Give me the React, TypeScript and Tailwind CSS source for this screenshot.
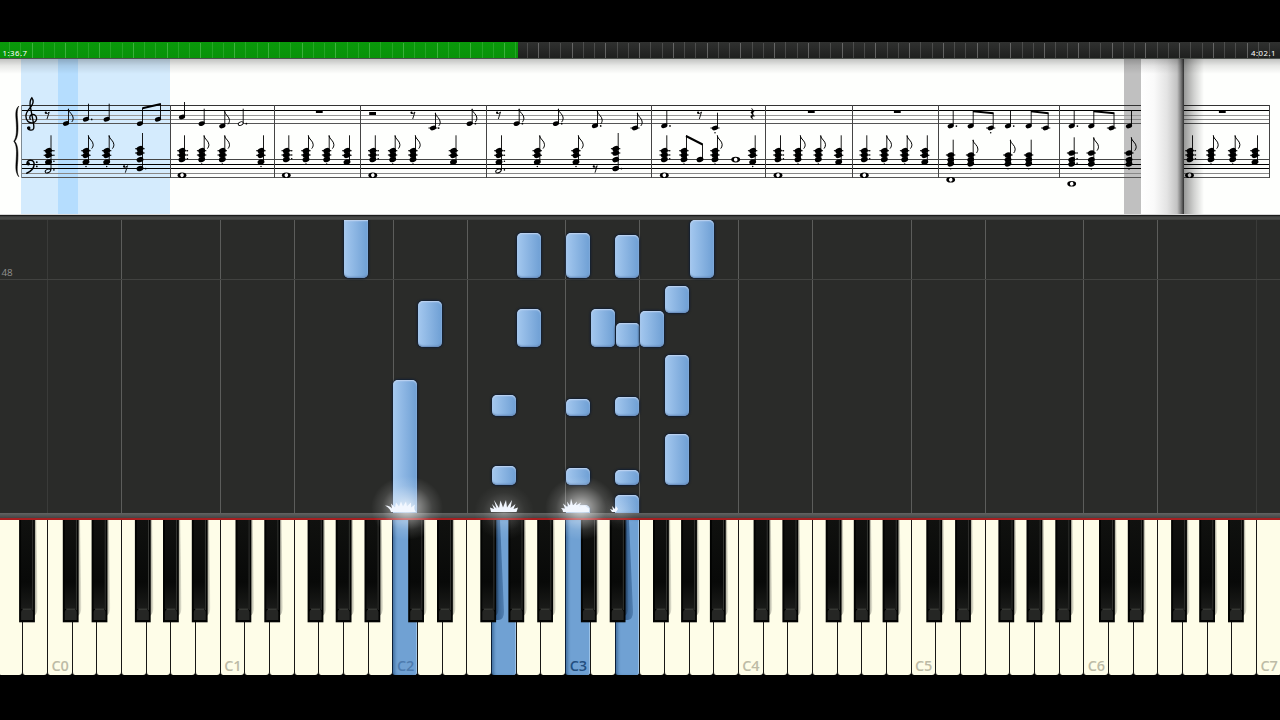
import React from "react";

/* ---------- sheet music ---------- */

const A = [150.7, 155, 159.5];
const B = [150.7, 155.3, 162];
const D = [148.7, 153, 159.6, 168.5];
const E = [155, 159.6, 163.8];
const F = [153, 159.6, 164];

type Chord = {
  x: number;
  heads: number[];
  top: number;
  flag?: boolean;
  dots?: boolean;
  dot?: boolean;
  stac?: number;
  half?: number;
  hollow?: boolean;
  ledger?: boolean;
};

const bass: Chord[] = [
  { x: 48.5, heads: B, top: 135.3, dots: true, half: 170.7 },
  { x: 86, heads: B, top: 135.3, flag: true, stac: 166.5 },
  { x: 106.7, heads: B, top: 135.3, flag: true, stac: 166.5 },
  { x: 140, heads: D, top: 133, dot: true },
  { x: 182, heads: A, top: 135.3, dots: true },
  { x: 201.7, heads: A, top: 135.3, flag: true, stac: 164 },
  { x: 222.3, heads: A, top: 135.3, flag: true, stac: 164 },
  { x: 261, heads: B, top: 135.3, stac: 166.5 },
  { x: 286.3, heads: A, top: 135.3, dots: true },
  { x: 306, heads: A, top: 135.3, flag: true, stac: 164 },
  { x: 326.7, heads: A, top: 135.3, flag: true, stac: 164 },
  { x: 347, heads: B, top: 135.3 },
  { x: 372.8, heads: A, top: 135.3, dots: true },
  { x: 392.7, heads: A, top: 135.3, flag: true, stac: 164 },
  { x: 413, heads: A, top: 135.3, flag: true, stac: 164 },
  { x: 453.5, heads: B, top: 135.3 },
  { x: 499, heads: B, top: 135.3, dots: true, half: 170.7 },
  { x: 537.3, heads: B, top: 135.3, flag: true, stac: 166.5 },
  { x: 576, heads: B, top: 135.3, flag: true, stac: 166.5 },
  { x: 615.7, heads: D, top: 133, dot: true },
  { x: 664.3, heads: A, top: 135.3, dots: true },
  { x: 684, heads: A, top: 135.3, stac: 164 },
  { x: 700, heads: [159.5], top: 144 },
  { x: 715, heads: A, top: 135.3, flag: true, stac: 164 },
  { x: 752.7, heads: B, top: 135.3, stac: 166.5 },
  { x: 778, heads: A, top: 135.3, dots: true },
  { x: 798, heads: A, top: 135.3, flag: true, stac: 164 },
  { x: 818.3, heads: A, top: 135.3, flag: true, stac: 164 },
  { x: 838.7, heads: B, top: 135.3 },
  { x: 864.3, heads: A, top: 135.3, dots: true },
  { x: 884.3, heads: A, top: 135.3, flag: true, stac: 164 },
  { x: 904.7, heads: A, top: 135.3, flag: true, stac: 164 },
  { x: 924.8, heads: B, top: 135.3 },
  { x: 950.7, heads: E, top: 139.7, stac: 168.8 },
  { x: 970.7, heads: E, top: 139.7, flag: true, stac: 168.8 },
  { x: 1008, heads: E, top: 139.7, flag: true, stac: 168.8 },
  { x: 1028.7, heads: E, top: 139.7, stac: 168.8 },
  { x: 1071.7, heads: F, top: 137.3, dots: true },
  { x: 1091.3, heads: F, top: 137.3, flag: true, stac: 169 },
  { x: 1129, heads: F, top: 137.3, flag: true, stac: 169 },
  { x: 1190, heads: A, top: 135.3, dots: true },
  { x: 1211, heads: A, top: 135.3, flag: true, stac: 164 },
  { x: 1232.7, heads: A, top: 135.3, flag: true, stac: 164 },
  { x: 1255, heads: B, top: 135.3 },
];

const treble: Chord[] = [
  { x: 66, heads: [123.5], top: 108.7, flag: true },
  { x: 86, heads: [119.3], top: 103.7, dot: true },
  { x: 106.7, heads: [119.3], top: 103.7 },
  { x: 140, heads: [123.6], top: 108 },
  { x: 158, heads: [119.3], top: 103.7 },
  { x: 182, heads: [117], top: 102 },
  { x: 201.7, heads: [123.6], top: 108.7 },
  { x: 222.3, heads: [126], top: 111, flag: true },
  { x: 240.7, heads: [123.6], top: 108.7, dot: true, hollow: true },
  { x: 433, heads: [128], top: 112.7, flag: true, dot: true, ledger: true },
  { x: 469.7, heads: [123.6], top: 108.7, flag: true, dot: true },
  { x: 516.7, heads: [123.6], top: 108.7, flag: true, dot: true },
  { x: 556, heads: [123.6], top: 108.7, flag: true, dot: true },
  { x: 595, heads: [125.8], top: 110.7, flag: true, dot: true },
  { x: 635, heads: [128], top: 112.7, flag: true, ledger: true },
  { x: 664.3, heads: [125.8], top: 110.7, dot: true },
  { x: 715, heads: [128], top: 112.7, ledger: true, stac: 132.7 },
  { x: 950.7, heads: [126], top: 110.7, dot: true },
  { x: 970.7, heads: [126], top: 110.7 },
  { x: 990.7, heads: [128], top: 112.7, ledger: true, stac: 132.7 },
  { x: 1008, heads: [126], top: 110.7, dot: true },
  { x: 1028.7, heads: [126], top: 110.7 },
  { x: 1045.7, heads: [128], top: 112.7, ledger: true },
  { x: 1071.7, heads: [126], top: 110.7, dot: true },
  { x: 1091.3, heads: [126], top: 110.7 },
  { x: 1111.5, heads: [128], top: 112.7, ledger: true },
  { x: 1129, heads: [126], top: 110.7 },
];

const wholes: [number, number][] = [
  [182, 175.2], [286.3, 175.2], [372.8, 175.2], [664.3, 175.2], [735.7, 159.6],
  [778, 175.2], [864.3, 175.2], [950.7, 179.7], [1071.7, 183.8], [1189.5, 175.2],
];

const blockRests: [number, number][] = [
  [319.3, 111.6], [372.6, 113.6], [811.3, 111.6], [897.3, 111.6], [1222.3, 111.6],
];

const eighthRests: [number, number][] = [
  [47, 115], [125.3, 168.7], [412.7, 115], [498.3, 115], [595, 168.7], [699.3, 115],
];

const beams: [number, number, number, number][] = [
  [142.4, 108.3, 160.9, 104],
  [686, 136, 702.6, 144.5],
  [973, 111.2, 993.4, 113.2],
  [1031, 111.2, 1048.4, 113.2],
  [1093.7, 111.2, 1114.3, 113.2],
];

const bars = [170.5, 274.5, 360.5, 486.5, 651.5, 765.5, 852.5, 938.5, 1059.5, 1269.5];

const staffLines: [number, string][] = [
  [105.5, "#333"], [110.5, "#000"], [115.5, "#999"], [119.5, "#888"], [123.5, "#555"],
  [159.5, "#444"], [164.5, "#000"], [168.5, "#000"], [173.5, "#888"], [177.5, "#555"],
];

function Note({ n, ledgers }: { n: Chord; ledgers?: boolean }) {
  const sx = n.x + 2.5;
  const bottom = n.half ?? n.heads[n.heads.length - 1];
  return (
    <g>
      <path d={`M${sx} ${n.top}V${bottom - 0.5}`} stroke="#000" strokeWidth="0.9" />
      {n.heads.map((y) =>
        n.hollow ? (
          <ellipse key={y} cx={n.x} cy={y} rx="2.6" ry="1.7" fill="#fff" stroke="#000" strokeWidth="0.9" transform={`rotate(-24 ${n.x} ${y})`} />
        ) : (
          <ellipse key={y} cx={n.x} cy={y} rx={ledgers ? 3.5 : 3.2} ry={ledgers ? 2.6 : 2.2} transform={`rotate(-20 ${n.x} ${y})`} />
        ),
      )}
      {ledgers &&
        n.heads.filter((y) => y < 157).map((y) => (
          <path key={y} d={`M${n.x - 4.8} ${y}h9.4`} stroke="#000" strokeWidth="1.1" />
        ))}
      {n.ledger && <path d={`M${n.x - 4.6} ${n.heads[0]}h9.2`} stroke="#000" strokeWidth="0.9" />}
      {n.half && (
        <ellipse cx={n.x - 0.6} cy={n.half} rx="2.9" ry="1.7" fill="none" stroke="#000" strokeWidth="1" transform={`rotate(-24 ${n.x} ${n.half})`} />
      )}
      {n.flag && (
        <path
          d={`M${sx - 0.3} ${n.top + 0.4}c0.600 3.400 5 5.200 5 9c0 1.600-0.700 3-1.500 3.900`}
          fill="none"
          stroke="#000"
          strokeWidth="1"
        />
      )}
      {n.dots && [...n.heads, ...(n.half ? [n.half] : [])].map((y) => <circle key={y} cx={n.x + 5.4} cy={y + (y < 157 ? 0 : -0.8)} r="0.8" />)}
      {n.dot && <circle cx={n.x + 5.7} cy={n.heads[n.heads.length - 1] + 0.1} r="0.85" />}
      {n.stac && <circle cx={n.x} cy={n.stac} r="0.75" />}
    </g>
  );
}

function Score() {
  return (
    <svg viewBox="0 59 1280 156" className="block h-[156px] w-[1280px]" fill="#000">
      <defs>
        <linearGradient id="topShade" x1="0" x2="0" y1="0" y2="1">
          <stop offset="0" stopColor="#000" stopOpacity="0.24" />
          <stop offset="0.45" stopColor="#000" stopOpacity="0.09" />
          <stop offset="1" stopColor="#000" stopOpacity="0" />
        </linearGradient>
        <linearGradient id="pageTurn">
          <stop offset="0" stopColor="#fff" />
          <stop offset="0.3" stopColor="#fafafa" />
          <stop offset="0.6" stopColor="#e4e4e4" />
          <stop offset="0.84" stopColor="#c2c2c2" />
          <stop offset="0.93" stopColor="#7a7a7a" />
          <stop offset="1" stopColor="#303030" />
        </linearGradient>
        <linearGradient id="pageShade">
          <stop offset="0" stopColor="#000" stopOpacity="0.4" />
          <stop offset="0.5" stopColor="#000" stopOpacity="0.18" />
          <stop offset="1" stopColor="#000" stopOpacity="0" />
        </linearGradient>
      </defs>
      <rect x="0" y="59" width="1280" height="156" fill="#fefffd" />
      <rect x="21" y="59" width="149" height="155" fill="#d4ebfd" />
      <rect x="58" y="59" width="20" height="155" fill="#b5ddfe" />
      <rect x="1124" y="59" width="17" height="155" fill="#c0c0c0" />
      {staffLines.map(([y, c]) => (
        <path key={y} d={`M21 ${y}H1270`} stroke={c} strokeWidth="1" />
      ))}
      <path d="M21.5 105V178" stroke="#7d8a94" />
      {bars.map((x) => (
        <path key={x} d={`M${x} 105V178`} stroke="#444" strokeWidth="1" />
      ))}
      <path d="M18.800 106c-4 3.500-3 9-2.600 16c0.400 7 0.800 15-2.400 19.300c3.200 4 2.800 11 2.400 18c-0.400 7-1.200 13 2.600 17.500c-2.400-5-1.400-10.500-1-16.500c0.400-7 0.500-15-3-19c3.500-4 3.400-12 3-19c-0.400-6-1.400-11.500 1-16.300z" stroke="#000" strokeWidth="0.500" />
      <path
        d="M27.800 127.600c0.400 3 5.200 3.600 6 0.500c0.300-1.400-0.100-3.400-0.400-5.200L30.300 106.500c-0.600-4 0.300-7.300 1.600-8.700c1.600 2.200 1.600 5.200-0.500 8.200c-2.300 3.400-5.500 5.300-5.500 10.100c0 4.400 2.800 6.900 6.300 6.700c2.700-0.100 4.600-2.100 4.400-4.700c-0.200-2.500-2.300-4-4.300-3.600c-2.100 0.400-3.300 2.800-2 4.800"
        fill="none"
        stroke="#000"
        strokeWidth="1.350"
        strokeLinecap="round"
      />
      <circle cx="28.800" cy="128" r="1.700" />
      <path d="M27 163.400c0.200-2.300 2-3.400 3.800-3.200c2.400 0.200 3.600 2.200 3.300 4.700c-0.400 3.800-3.600 6.700-7.400 8.400" fill="none" stroke="#000" strokeWidth="1.500" strokeLinecap="round" />
      <circle cx="28.300" cy="163.800" r="1.700" />
      <circle cx="36.800" cy="162.200" r="0.900" />
      <circle cx="36.800" cy="166.400" r="0.900" />
      {treble.map((n) => <Note key={n.x} n={n} />)}
      {bass.map((n) => <Note key={n.x} n={n} ledgers />)}
      {wholes.map(([x, y]) => (
        <g key={x}>
          <ellipse cx={x} cy={y} rx="4.400" ry="2.800" />
          <ellipse cx={x} cy={y} rx="1.800" ry="1.900" fill="#fff" transform={`rotate(-20 ${x} ${y})`} />
        </g>
      ))}
      {blockRests.map(([x, y]) => <rect key={x} x={x - 3.400} y={y - 1.600} width="6.800" height="3" />)}
      {eighthRests.map(([x, y]) => (
        <g key={x}>
          <circle cx={x - 1.200} cy={y - 2.300} r="1.100" />
          <path d={`M${x - 1.600} ${y - 1.800}q2.200 1.200 3.800-1.200L${x} ${y + 4}`} fill="none" stroke="#000" strokeWidth="0.900" />
        </g>
      ))}
      <path d="M751.500 108l2.600 3.400c-1.600 1.600-1.400 2.600 0.600 5c-2.600-0.800-3.200 0.600-1.400 3c-3.400-1.600-3.400-4.400-0.600-4.200l-2-2.800c1.600-1.400 1.800-2.600 0.800-4.400z" stroke="#000" strokeWidth="0.300" />
      {beams.map(([x1, y1, x2, y2]) => (
        <path key={x1} d={`M${x1} ${y1}L${x2} ${y2}`} stroke="#000" strokeWidth="2" />
      ))}
      <rect x="1141" y="59" width="43" height="155" fill="url(#pageTurn)" />
      <rect x="1184" y="59" width="20" height="155" fill="url(#pageShade)" />
      <rect x="0" y="59" width="1280" height="15" fill="url(#topShade)" />
      <rect x="0" y="214" width="1280" height="1" fill="#d7d7d7" />
    </svg>
  );
}

/* ---------- progress strip ---------- */

const ticks = Array.from({ length: 113 }, (_, i) => 9.55 + i * 11.25);

function Progress() {
  return (
    <div className="relative flex h-[17px] w-full shrink-0 bg-gradient-to-b from-[#303130] to-[#1d1e1d]">
      <div className="h-full w-[518px] bg-gradient-to-b from-[#0a990b] to-[#089208]" />
      <svg viewBox="0 0 1280 17" className="absolute inset-0 h-[17px] w-[1280px]">
        {ticks.map((x, i) => (
          <path
            key={x}
            d={`M${Math.floor(x) + 0.5} ${i % 3 === 0 ? 0 : 1}V16`}
            stroke={x < 518 ? "#6fd06f" : "#a0a0a0"}
            strokeOpacity={i % 3 === 2 ? 0.5 : 0.28}
          />
        ))}
        <path d="M0 16.500H1280" stroke="#4c504c" />
      </svg>
      <div className="absolute inset-0 flex items-start justify-between pl-[2.500px] pr-[4px] pt-[6px] font-['Noto_Sans',sans-serif] text-[7.800px] leading-[10px] tracking-[0.500px] text-white">
        <span>1:36.7</span>
        <span>4:02.1</span>
      </div>
    </div>
  );
}

/* ---------- falling notes ---------- */

type Block = { x: number; y: number; h: number; open?: "top" | "bottom" };

const blocks: Block[] = [
  { x: 344, y: 220, h: 58, open: "top" },
  { x: 689.500, y: 219.500, h: 58.500 },
  { x: 516.700, y: 233, h: 45 },
  { x: 566, y: 233, h: 45 },
  { x: 615.300, y: 235, h: 43 },
  { x: 664.800, y: 285.500, h: 27 },
  { x: 417.800, y: 300.500, h: 46.500 },
  { x: 516.700, y: 308.500, h: 38.500 },
  { x: 590.800, y: 309, h: 38 },
  { x: 615.500, y: 323, h: 24 },
  { x: 640, y: 311, h: 36 },
  { x: 664.800, y: 355, h: 61 },
  { x: 664.800, y: 433.500, h: 51.500 },
  { x: 492, y: 395, h: 21 },
  { x: 566, y: 399, h: 17 },
  { x: 615.300, y: 397, h: 19 },
  { x: 492, y: 466, h: 19 },
  { x: 566, y: 468, h: 17 },
  { x: 615.300, y: 470, h: 15 },
  { x: 393.300, y: 380, h: 134, open: "bottom" },
  { x: 566, y: 505, h: 9, open: "bottom" },
  { x: 615.300, y: 495, h: 19, open: "bottom" },
];

const laneLines = Array.from({ length: 8 }, (_, k) => [47.5 + k * 172.7, 121.5 + k * 172.7]).flat().filter((x) => x < 1280);

function Roll() {
  return (
    <div className="relative h-[293px] w-full shrink-0 overflow-hidden bg-[#2a2b29]">
      <svg viewBox="0 220 1280 293" className="absolute inset-0 h-[293px] w-[1280px]">
        {laneLines.map((x, i) => (
          <path key={x} d={`M${Math.floor(x + 0.2) + 0.5} 220V513`} stroke={i === 0 || x > 1250 ? "#3a3b39" : "#5c5d5b"} />
        ))}
        <path d="M0 279.500H1280" stroke="#414240" />
      </svg>
      <span className="absolute left-[1.500px] top-[46px] font-['Open_Sans',sans-serif] text-[9.800px] leading-[14px] text-[#90918f]">48</span>
      {blocks.map((b) => (
        <div
          key={`${b.x}-${b.y}`}
          className={
            "absolute w-[24px] bg-gradient-to-r from-[#a4c8ef] to-[#6e9fd4] shadow-[0_0_2px_1px_#101e33,inset_0_1px_1.500px_#c3d6f2,inset_0_-2px_2px_-1px_#6285b5] " +
            (b.open === "top" ? "rounded-b-[5px]" : b.open === "bottom" ? "rounded-t-[5px]" : "rounded-[5px]")
          }
          style={{ left: b.x, top: b.y - 220, height: b.h }}
        />
      ))}
    </div>
  );
}

/* ---------- keyboard ---------- */

const PITCH = 24.672;
const whiteKeys = Array.from({ length: 53 }, (_, i) => i);
const pressed = [16, 20, 23, 25];
const blackKeys = Array.from({ length: 8 }, (_, o) =>
  [14.8, 43.6, 86.9, 115, 143.8].map((d) => 48 + (o - 1) * 172.7 + d),
)
  .flat()
  .filter((x) => x > 10 && x < 1250);

function Keyboard() {
  return (
    <div className="relative h-[155px] w-full shrink-0 overflow-hidden bg-black">
      <div className="ml-[-2.300px] flex h-full w-[1310px]">
        {whiteKeys.map((i) => {
          const on = pressed.includes(i);
          const octave = (i - 2) / 7;
          return (
            <div
              key={i}
              className={
                "flex shrink-0 items-end rounded-b-[3px] border-l " +
                (on
                  ? "border-[#0b1e38] bg-[#70a1d3] shadow-[inset_3px_0_3px_-1px_#4673a3,inset_-1px_0_0_#9bc2e8]"
                  : "border-[#181816] bg-[#fefde8]")
              }
              style={{ width: PITCH }}
            >
              {Number.isInteger(octave) && (
                <span
                  className={
                    "mb-[0.500px] ml-[3.500px] font-['Open_Sans',sans-serif] text-[14.500px] font-semibold leading-[18px] tracking-[-0.200px] " +
                    (octave === 3 ? "text-[#234f80]" : octave === 2 ? "text-[#4d7bae]" : "text-[#bdbba6]")
                  }
                >
                  C{octave}
                </span>
              )}
            </div>
          );
        })}
      </div>
      <svg viewBox="0 520 1280 156" className="absolute left-0 top-0 h-[156px] w-[1280px]">
        <defs>
          <linearGradient id="blackKey" x1="0" x2="0" y1="0" y2="1">
            <stop offset="0" stopColor="#10110f" />
            <stop offset="0.700" stopColor="#080908" />
            <stop offset="1" stopColor="#1a1b19" />
          </linearGradient>
          <linearGradient id="castShade">
            <stop offset="0" stopColor="#000" stopOpacity="0.400" />
            <stop offset="1" stopColor="#000" stopOpacity="0.060" />
          </linearGradient>
          <linearGradient id="deepShade">
            <stop offset="0" stopColor="#1f4877" stopOpacity="0.800" />
            <stop offset="1" stopColor="#2c5687" stopOpacity="0.450" />
          </linearGradient>
        </defs>
        <path d="M495 520h5l4 92q0 7-5 8h-4z" fill="url(#deepShade)" />
        <path d="M624 520h5l4 92q0 7-5 8h-4z" fill="url(#deepShade)" />
        {blackKeys.map((x) => (
          <g key={x}>
            <path d={`M${x + 15} 520h2.200l1.400 88q0 5-3.600 8z`} fill="url(#castShade)" />
            <rect x={x} y="520" width="15.800" height="102.300" fill="#020302" />
            <rect x={x + 2} y="520" width="11" height="89" fill="url(#blackKey)" />
            <path d={`M${x + 13.600} 520V610`} stroke="#4c4d49" strokeWidth="0.700" />
            <path d={`M${x + 2} 620v-8q0-2.500 2-2.500h8q2 0 2 2.500v8z`} fill="#252624" />
            <path d={`M${x + 3.500} 609.200h9`} stroke="#53544f" strokeWidth="0.800" />
          </g>
        ))}
      </svg>
    </div>
  );
}

/* ---------- hit sparks ---------- */

function Sparks() {
  return (
    <svg viewBox="340 450 340 120" className="pointer-events-none absolute left-[340px] top-[450px] h-[120px] w-[340px]">
      <defs>
        <radialGradient id="halo">
          <stop offset="0" stopColor="#fff" stopOpacity="0.750" />
          <stop offset="0.350" stopColor="#fff" stopOpacity="0.420" />
          <stop offset="0.700" stopColor="#fff" stopOpacity="0.120" />
          <stop offset="1" stopColor="#fff" stopOpacity="0" />
        </radialGradient>
      </defs>
      <ellipse cx="407" cy="508" rx="36" ry="32" fill="url(#halo)" />
      <ellipse cx="504" cy="512" rx="30" ry="28" fill="url(#halo)" opacity="0.400" />
      <ellipse cx="581" cy="508" rx="36" ry="32" fill="url(#halo)" />
      <ellipse cx="620" cy="512" rx="20" ry="18" fill="url(#halo)" opacity="0.250" />
      <g fill="#f2f7ff">
        <path d="M391 512c-1-3-3-5-6-6.500c4 0 6 1.500 7 3l-1-5l4 4l1-5l3 4l2-5l2 5l3-5l1 5l4-4l0 5l4-3c-1 3-1 5 1 7.500z" />
        <path d="M491 512l-1-4.500l4 1.500l-2-5l4.500 4.500l-2.500-8.500l5 8l1.500-7.500l2.500 7l3-7.500l1 7.500l5-7.500l-1.500 8l5-4l-2 5l4.500-1.500l-1.500 4.500z" />
        <path d="M563 512c0-2-1-3-2-4l4 0.500l-2-5l5 4l-1-6l3 4l1-7l2 7l4-4l-1 4l5-3l-2 4l6-1l4 3v3.500z" />
        <path d="M612 512l-2-3l3 1l-1-4l3 3l1-3l2 3l-2 3z" />
      </g>
    </svg>
  );
}

export default function App() {
  return (
    <div className="relative flex h-[720px] w-[1280px] flex-col overflow-hidden bg-black pt-[42px]">
      <Progress />
      <Score />
      <div className="h-[5px] w-full shrink-0 border-t border-[#1b1c1b] bg-gradient-to-b from-[#353635] via-[#4c4d4b] to-[#3c3d3b]" />
      <Roll />
      <div className="h-[7px] w-full shrink-0 border-b-2 border-[#a61f20] bg-gradient-to-b from-[#636463] to-[#444545]" />
      <Keyboard />
      <Sparks />
    </div>
  );
}
